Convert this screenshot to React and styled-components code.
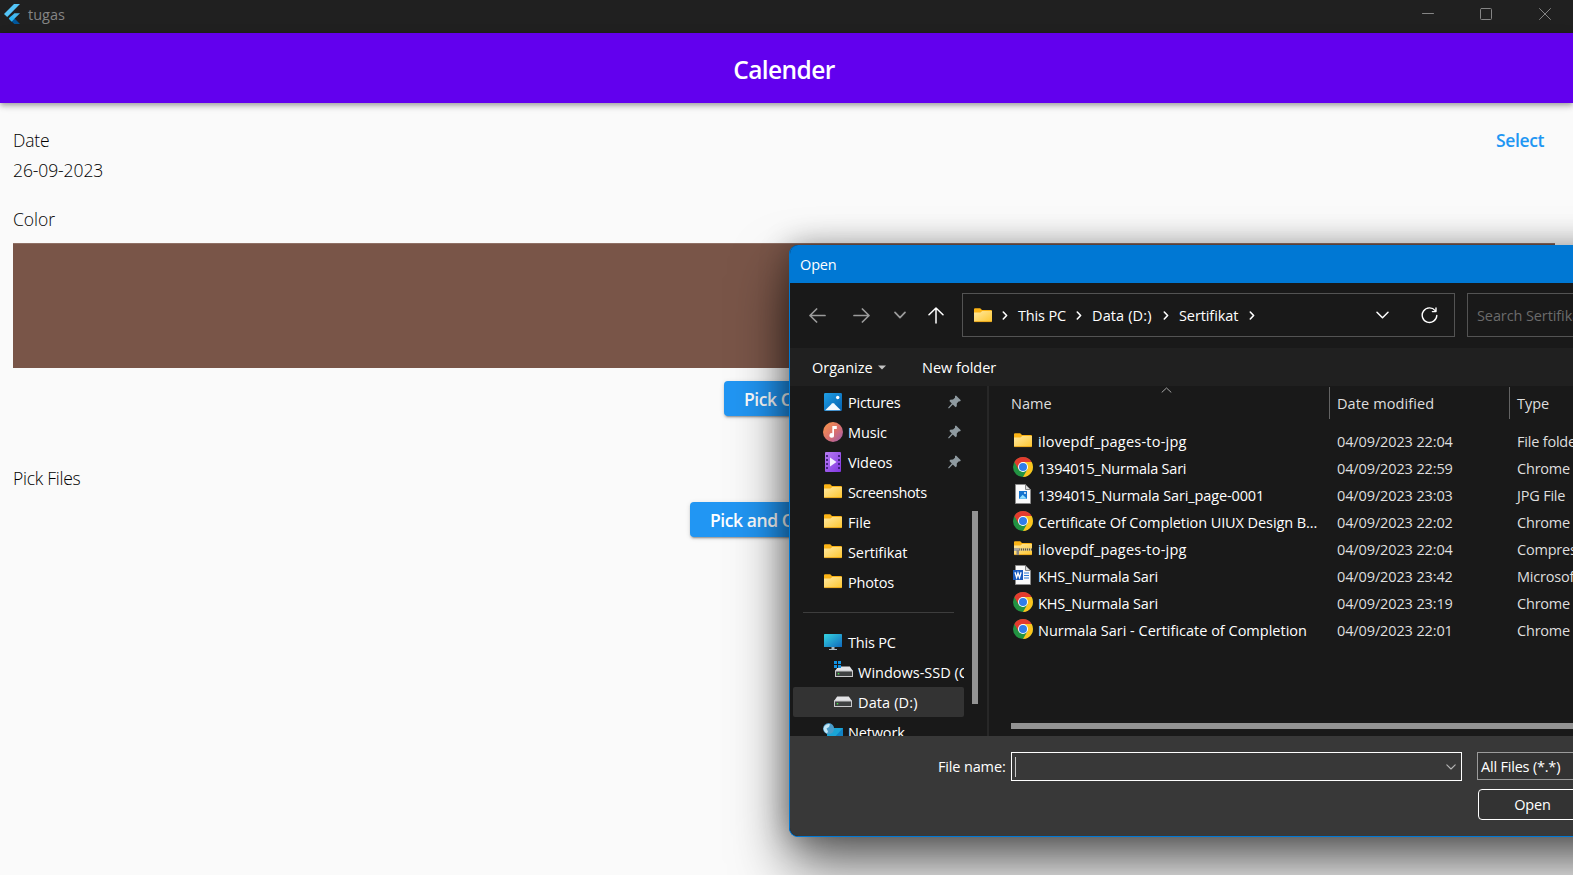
import React from "react";
import styled, { createGlobalStyle } from "styled-components";

const GlobalStyle = createGlobalStyle`
  * { box-sizing: border-box; }
  html, body { margin: 0; padding: 0; overflow: hidden; }
  body {
    font-family: "Open Sans", "Noto Sans", sans-serif;
    font-size: 14.5px;
    background: #fafafa;
  }
  svg { display: block; flex: none; }
`;

/* ---------- main window ---------- */

const Window = styled.div`
  position: relative;
  width: 1573px;
  height: 875px;
  overflow: hidden;
  background: #fafafa;
  display: flex;
  flex-direction: column;
`;

const TitleBar = styled.header`
  height: 33px;
  flex: none;
  background: #202020;
  color: #858585;
  display: flex;
  justify-content: space-between;
  align-items: flex-start;
  padding: 4px 22px 0 4px;
`;

const AppName = styled.div`
  display: flex;
  gap: 8px;
  line-height: 21px;
`;

const WindowControls = styled.div`
  display: flex;
  gap: 46px;
  padding-top: 4px;
`;

const AppBar = styled.div`
  height: 70px;
  flex: none;
  background: #6200ee;
  color: #fff;
  display: flex;
  justify-content: center;
  align-items: center;
  padding: 3px 5px 0 0;
  font-size: 24.5px;
  font-weight: 600;
  letter-spacing: -0.6px;
  box-shadow: 0 2px 4px -1px rgba(0, 0, 0, 0.2), 0 4px 5px rgba(0, 0, 0, 0.14),
    0 1px 10px rgba(0, 0, 0, 0.12);
`;

const Content = styled.main`
  padding: 24px 18px 0 13px;
  display: flex;
  flex-direction: column;
`;

const DateRow = styled.div`
  display: flex;
  justify-content: space-between;
  padding-right: 11px;
`;

const Label = styled.div`
  height: ${(p) => p.$h || 26}px;
  line-height: 26px;
  font-size: 17.5px;
  font-weight: 300;
  color: #000;
  letter-spacing: ${(p) => p.$ls || 0}px;
`;

const DateValue = styled(Label)`
  margin-top: 4px;
  margin-bottom: 23px;
`;

const SelectLink = styled(Label)`
  color: #2196f3;
  font-weight: 600;
`;

const ColorBox = styled.div`
  height: 125px;
  background: #795548;
  border-top: 1px solid #8f7065;
  margin-top: 11px;
`;

const ActionButton = styled.button`
  align-self: center;
  width: ${(p) => p.$w}px;
  height: 35px;
  margin: ${(p) => p.$mt}px 0 ${(p) => p.$mb || 0}px;
  padding: 0 20px;
  border: 0;
  border-radius: 4px;
  background: #2196f3;
  color: #fff;
  font: 600 17.5px "Open Sans", sans-serif;
  letter-spacing: -0.42px;
  text-align: left;
  white-space: nowrap;
  box-shadow: 0 3px 1px -2px rgba(0, 0, 0, 0.2), 0 2px 2px rgba(0, 0, 0, 0.14),
    0 1px 5px rgba(0, 0, 0, 0.12);
`;

/* ---------- file dialog ---------- */

const Dialog = styled.section`
  position: absolute;
  left: 789px;
  top: 245px;
  width: 900px;
  height: 592px;
  border: 1px solid #0078d4;
  border-top: 0;
  border-radius: 9px;
  background: #191919;
  color: #fff;
  overflow: hidden;
  display: flex;
  flex-direction: column;
`;

const DialogShadow = styled(Dialog)`
  overflow: visible;
  box-shadow: 0 28px 56px rgba(0, 0, 0, 0.6), 0 0 30px rgba(0, 0, 0, 0.3);
`;

const Text = styled.span`
  letter-spacing: ${(p) => p.$ls || 0}px;
  white-space: nowrap;
`;

const DialogTitle = styled.div`
  height: 38px;
  flex: none;
  background: #0078d4;
  padding-left: 10px;
  line-height: 39px;
  letter-spacing: -0.15px;
`;

const NavBar = styled.div`
  height: 65px;
  flex: none;
  display: flex;
  align-items: center;
  padding: 0 0 1px 19px;
`;

const NavIcons = styled.div`
  width: 153px;
  flex: none;
  display: flex;
  align-items: center;
`;

const AddressBox = styled.div`
  width: 493px;
  flex: none;
  height: 44px;
  border: 1px solid #535353;
  display: flex;
  align-items: center;
  padding: 0 16px 0 11px;
`;

const Crumb = styled(Text)`
  width: ${(p) => p.$w}px;
`;

const Crumbs = styled.div`
  flex: 1;
  display: flex;
  align-items: center;
`;

const SearchBox = styled.div`
  width: 200px;
  flex: none;
  height: 44px;
  margin-left: 12px;
  border: 1px solid #535353;
  padding-left: 9px;
  line-height: 43px;
  color: #6b6b6b;
`;

const Toolbar = styled.div`
  height: 38px;
  flex: none;
  background: #202020;
  display: flex;
  align-items: center;
  padding: 1px 0 0 22px;
`;

const Organize = styled.div`
  width: 110px;
  display: flex;
  align-items: center;
  gap: 5px;
`;

const Body = styled.div`
  height: 350px;
  flex: none;
  display: flex;
  overflow: hidden;
`;

const Sidebar = styled.div`
  width: 199px;
  flex: none;
  display: flex;
  border-right: 2px solid #272727;
  padding: 1px 0 0 3px;
`;

const Places = styled.nav`
  width: 171px;
  flex: none;
  height: 360px;
`;

const Place = styled.div`
  height: 30px;
  padding-left: ${(p) => (p.$nested ? 41 : 31)}px;
  padding-right: 3px;
  display: flex;
  align-items: center;
  overflow: hidden;
  border-radius: 2px;
  background: ${(p) => (p.$active ? "#333333" : "transparent")};
`;

const PlaceIcon = styled.span`
  width: 20px;
  display: flex;
  justify-content: center;
  margin: 0 5px 1px -1px;
  flex: none;
`;

const PlaceName = styled(Text)`
  flex: 1;
`;

const Divider = styled.div`
  height: 30px;
  padding: 15px 10px 0 10px;
  &::after {
    content: "";
    display: block;
    height: 1px;
    background: #3d3d3d;
  }
`;

const VerticalThumb = styled.div`
  width: 6px;
  height: 193px;
  margin: 124px 0 0 8px;
  background: #939393;
`;

const Files = styled.div`
  flex: 1;
  padding-left: 22px;
`;

const HeaderRow = styled.div`
  display: grid;
  grid-template-columns: 318px 180px 200px;
  height: 33px;
  margin-bottom: 9px;
  color: #dedede;
`;

const HeaderCell = styled.div`
  position: relative;
  line-height: 33px;
  margin-top: 1px;
  height: 32px;
  padding-left: ${(p) => (p.$first ? 0 : 7)}px;
  border-left: ${(p) => (p.$first ? "0" : "1px solid #636363")};
  letter-spacing: ${(p) => p.$ls || 0}px;
`;

const SortMark = styled.span`
  position: absolute;
  left: 150px;
  top: 0;
`;

const FileRow = styled.div`
  display: grid;
  grid-template-columns: 326px 180px 200px;
  height: 27px;
  align-items: center;
  color: #dedede;
`;

const FileName = styled.div`
  display: flex;
  align-items: center;
  color: #fff;
`;

const FileIcon = styled.span`
  width: 20px;
  height: 23px;
  margin: 0 5px 1px 2px;
  flex: none;
  display: flex;
  justify-content: center;
  align-items: flex-start;
  padding-top: ${(p) => p.$top}px;
`;

const HorizontalThumb = styled.div`
  height: 6px;
  margin-top: 79px;
  background: #939393;
`;

const Footer = styled.footer`
  flex: 1;
  background: #383838;
  padding: 16px 0 0 148px;
`;

const FooterRow = styled.div`
  display: flex;
  align-items: flex-start;
  line-height: 29px;
`;

const FieldLabel = styled(Text)`
  width: 73px;
  flex: none;
`;

const NameInput = styled.div`
  width: 451px;
  flex: none;
  height: 29px;
  margin-right: 15px;
  border: 1px solid #fff;
  display: flex;
  align-items: center;
  justify-content: space-between;
  padding: 0 5px 0 3px;
`;

const Caret = styled.i`
  width: 1px;
  height: 20px;
  background: #c8c8c8;
`;

const FilterBox = styled.div`
  width: 200px;
  flex: none;
  height: 28px;
  border: 1px solid #9b9b9b;
  background: #333;
  padding-left: 3px;
  line-height: 27px;
`;

const OpenButton = styled.button`
  display: block;
  width: 109px;
  height: 31px;
  margin: 8px 0 0 540px;
  border: 1px solid #fff;
  border-radius: 4px;
  background: #333;
  color: #fff;
  font: 14.5px "Open Sans", sans-serif;
  letter-spacing: -0.15px;
  padding: 0;
`;

/* ---------- icons ---------- */

const Stroke = ({ w, h, d, color = "#fff", sw = 1.5 }) => (
  <svg width={w} height={h} viewBox={`0 0 ${w} ${h}`} fill="none" stroke={color} strokeWidth={sw} strokeLinecap="round" strokeLinejoin="round">
    <path d={d} />
  </svg>
);

const NavSlot = styled.span`
  width: ${(p) => p.$w}px;
  display: flex;
`;

const FlutterLogo = () => (
  <svg width="16" height="20" viewBox="0 0 16 20">
    <path d="M10 0H16L3.2 13L0 10Z" fill="#54c5f8" />
    <path d="M10.4 9.2H16L10.6 14.6L7.6 17.4L4.8 14.6Z" fill="#45b8ee" />
    <path d="M7.6 17.4L10.6 14.6L16 20H10.4Z" fill="#01579b" />
    <path d="M4.8 14.6L7.7 11.8L10.6 14.6L7.7 17.4Z" fill="#29b6f6" />
  </svg>
);

const Folder = ({ zip }) => (
  <svg width="18" height="15" viewBox="0 0 18 15">
    <defs>
      <linearGradient id="folderFace" x1="0" y1="0" x2="1" y2="1">
        <stop offset="0" stopColor="#ffe9a3" />
        <stop offset="1" stopColor="#fdc62e" />
      </linearGradient>
    </defs>
    <path d="M0 1.2Q0 .2 1 .2H6.2L8 2H17Q18 2 18 3V8H0Z" fill="#fbb315" />
    <path d="M0 4.4H6.5L8.2 3H18V13.2Q18 14 17 14H1Q0 14 0 13.2Z" fill="url(#folderFace)" />
    <path d="M.4 13.6H17.6" stroke="#e8a317" strokeWidth=".9" />
    {zip && (
      <g>
        <path d="M0 7H18V10H0Z" fill="#d9c27e" />
        <path d="M5 8.5H18" stroke="#5b5440" strokeWidth="2" strokeDasharray="1 1" />
        <path d="M0 7H5.5V10H0Z" fill="#a9a59b" />
        <path d="M2.5 9H5V14H2.5Z" fill="#8b8883" />
      </g>
    )}
  </svg>
);

const Chrome = () => (
  <svg width="20" height="20" viewBox="0 0 20 20">
    <circle cx="10" cy="10" r="10" fill="#229342" />
    <path d="M18.66 5A10 10 0 0 1 10 20L14.33 12.5L10 5Z" fill="#fcc31e" />
    <path d="M1.34 5A10 10 0 0 1 18.66 5H10L5.67 12.5Z" fill="#e33b2e" />
    <circle cx="10" cy="10" r="5" fill="#fff" />
    <circle cx="10" cy="10" r="4" fill="#2f7de9" />
  </svg>
);

const PageShape = () => (
  <g>
    <path d="M2.5 .5H12.5L17.5 5.5V19.5H2.5Z" fill="#fafafa" stroke="#8b8b8b" />
    <path d="M12.5 .5V5.5H17.5Z" fill="#dcdcdc" stroke="#6e6e6e" strokeWidth=".8" />
  </g>
);

const ImageFile = () => (
  <svg width="20" height="20" viewBox="0 0 20 20">
    <PageShape />
    <rect x="6" y="7" width="8" height="8" fill="#1574cf" />
    <path d="M6 14.8L9.6 10.8L14 14.8Z" fill="#8fe0ff" />
    <circle cx="12" cy="9" r=".9" fill="#fff" />
  </svg>
);

const WordFile = () => (
  <svg width="20" height="20" viewBox="0 0 20 20">
    <PageShape />
    <path d="M11 8H16M11 10.5H16M11 13H16" stroke="#2b78d4" />
    <rect x="0" y="5" width="10" height="10" fill="#185abd" />
    <path d="M2 7.3L3.6 12.6L5 8L6.5 12.6L8.1 7.3" fill="none" stroke="#fff" strokeWidth="1.3" />
  </svg>
);

const PicturesIcon = () => (
  <svg width="18" height="18" viewBox="0 0 18 18">
    <defs>
      <linearGradient id="pic" x1="0" y1="0" x2="1" y2="1">
        <stop offset="0" stopColor="#1f9fe6" />
        <stop offset="1" stopColor="#0560ae" />
      </linearGradient>
    </defs>
    <rect width="18" height="18" rx="1.2" fill="url(#pic)" />
    <path d="M1.2 17.2L8 10.4Q9 9.4 10 10.4L16.8 17.2Z" fill="#f4faff" />
    <circle cx="13.7" cy="4.5" r="1.7" fill="#fff" />
  </svg>
);

const MusicIcon = () => (
  <svg width="20" height="20" viewBox="0 0 20 20">
    <defs>
      <linearGradient id="mus" x1="0" y1="0" x2="1" y2="1">
        <stop offset=".1" stopColor="#f5914f" />
        <stop offset=".55" stopColor="#d9706f" />
        <stop offset="1" stopColor="#9a59b5" />
      </linearGradient>
    </defs>
    <circle cx="10" cy="10" r="10" fill="url(#mus)" />
    <path d="M9.3 4H13.8V7H11V13.2A2.3 2.3 0 1 1 9.3 11.2Z" fill="#fff" />
  </svg>
);

const VideosIcon = () => (
  <svg width="16" height="20" viewBox="0 0 16 20">
    <defs>
      <linearGradient id="vid" x1="0" y1="0" x2="1" y2="1">
        <stop offset="0" stopColor="#b77cf3" />
        <stop offset="1" stopColor="#8136e0" />
      </linearGradient>
    </defs>
    <rect width="16" height="20" rx="1" fill="url(#vid)" />
    <path d="M2 3V19M14 3V19" stroke="#3c1c78" strokeWidth="1.8" strokeDasharray="2 2" />
    <path d="M5 5.5L11.5 10L5 14.5Z" fill="#f5f0ff" />
  </svg>
);

const ThisPcIcon = () => (
  <svg width="18" height="16" viewBox="0 0 18 16">
    <defs>
      <linearGradient id="pc" x1="0" y1="0" x2="1" y2="1">
        <stop offset="0" stopColor="#36d5e2" />
        <stop offset="1" stopColor="#0f69bd" />
      </linearGradient>
    </defs>
    <rect width="18" height="13" rx=".6" fill="url(#pc)" />
    <path d="M7.5 13H10.5V15H13V16H5V15H7.5Z" fill="#a9b7c1" />
  </svg>
);

const DriveIcon = ({ system }) => (
  <svg width={system ? 19 : 18} height={system ? 21 : 11} viewBox={system ? "-1 -5 19 21" : "0 0 18 11"}>
    <path d="M0 5L3.2 .4H14.8L18 5Z" fill="#e3e3e6" />
    <path d="M0 4.5H18V11H0Z" fill="#c9c9cb" />
    <path d="M1 5.5H17V10H1Z" fill="#3f4142" />
    <rect x="2.8" y="7" width="1.4" height="1.4" fill="#45e04a" />
    {system && (
      <g>
        <path d="M-1 -5H6V2H-1Z" fill="#191919" />
        <path d="M-1 -5H2V-2H-1ZM3-5H6V-2H3ZM-1-1H2V2H-1ZM3-1H6V2H3Z" fill="#1093e4" />
      </g>
    )}
  </svg>
);

const NetworkIcon = () => (
  <svg width="20" height="18" viewBox="0 0 20 18">
    <rect x="4" y="5" width="16" height="12" fill="#1aa5d6" />
    <path d="M20 5V17H9Z" fill="#1282c4" />
    <circle cx="5.6" cy="5.6" r="5.5" fill="#4a9cc9" />
    <path d="M1.5 3Q4 .5 7 1.2L6 4L3.5 5.5L5 8.5L4 10.5Q.5 8.5 .5 5.5Z" fill="#c3e6f5" />
  </svg>
);

const Pin = () => (
  <svg width="13" height="14" viewBox="0 0 13 14">
    <path d="M8 .4L12.8 5.2L12.2 6.3L10.6 6.4L8.8 8.6L8.8 11.2L7.6 12.2L4.8 9.4L.9 13.4L.1 12.8L3.8 8.4L1.4 6L2.2 4.7L5 4.6L7 2.8L7 1.1Z" fill="#8f9aa0" />
  </svg>
);

const Chevron = () => <Stroke w={6} h={9} d="M1.3 1L4.6 4.5L1.3 8" sw={1.6} />;

/* ---------- data ---------- */

const places = [
  { name: "Pictures", icon: <PicturesIcon />, pin: true, ls: -0.25 },
  { name: "Music", icon: <MusicIcon />, pin: true, ls: -0.15 },
  { name: "Videos", icon: <VideosIcon />, pin: true, ls: -0.1 },
  { name: "Screenshots", icon: <Folder />, ls: -0.35 },
  { name: "File", icon: <Folder /> },
  { name: "Sertifikat", icon: <Folder />, ls: -0.1 },
  { name: "Photos", icon: <Folder />, ls: -0.2 },
  null,
  { name: "This PC", icon: <ThisPcIcon />, ls: -0.2 },
  { name: "Windows-SSD (C:)", icon: <DriveIcon system />, nested: true, ls: 0 },
  { name: "Data (D:)", icon: <DriveIcon />, nested: true, active: true, ls: 0.12 },
  { name: "Network", icon: <NetworkIcon />, ls: -0.15 },
];

const files = [
  { name: "ilovepdf_pages-to-jpg", icon: <Folder />, top: 3, date: "04/09/2023 22:04", type: "File folder", ls: 0.23 },
  { name: "1394015_Nurmala Sari", icon: <Chrome />, date: "04/09/2023 22:59", type: "Chrome HTML Document", ls: -0.22 },
  { name: "1394015_Nurmala Sari_page-0001", icon: <ImageFile />, date: "04/09/2023 23:03", type: "JPG File", ls: -0.12 },
  { name: "Certificate Of Completion UIUX Design B...", icon: <Chrome />, date: "04/09/2023 22:02", type: "Chrome HTML Document", ls: -0.08 },
  { name: "ilovepdf_pages-to-jpg", icon: <Folder zip />, top: 3, date: "04/09/2023 22:04", type: "Compressed folder", ls: 0.23 },
  { name: "KHS_Nurmala Sari", icon: <WordFile />, date: "04/09/2023 23:42", type: "Microsoft Word", ls: -0.13 },
  { name: "KHS_Nurmala Sari", icon: <Chrome />, date: "04/09/2023 23:19", type: "Chrome HTML Document", ls: -0.13 },
  { name: "Nurmala Sari - Certificate of Completion", icon: <Chrome />, date: "04/09/2023 22:01", type: "Chrome HTML Document", ls: 0 },
];

const crumbs = [
  { name: "This PC", w: 58, ls: -0.15 },
  { name: "Data (D:)", w: 71, ls: 0.12 },
  { name: "Sertifikat", w: 70, ls: -0.1 },
];

function OpenDialog() {
  return (
    <>
      <DialogShadow />
      <Dialog>
        <DialogTitle>Open</DialogTitle>
        <NavBar>
          <NavIcons>
            <NavSlot $w={44}>
              <Stroke w={17} h={15} color="#9b9b9b" d="M16 7.5H1M7.6 1L1 7.5L7.6 14" sw={1.7} />
            </NavSlot>
            <NavSlot $w={41}>
              <Stroke w={17} h={15} color="#9b9b9b" d="M1 7.5H16M9.4 1L16 7.5L9.4 14" sw={1.7} />
            </NavSlot>
            <NavSlot $w={34}>
              <Stroke w={12} h={8} color="#9b9b9b" d="M1 1.3L6 6.6L11 1.3" sw={1.7} />
            </NavSlot>
            <Stroke w={16} h={17} d="M8 16V1M1 7.8L8 1L15 7.8" sw={1.5} />
          </NavIcons>
          <AddressBox>
            <Crumbs>
              <NavSlot $w={28}>
                <Folder />
              </NavSlot>
              <NavSlot $w={16}>
                <Chevron />
              </NavSlot>
              {crumbs.map((c) => (
                <React.Fragment key={c.name}>
                  <Crumb $w={c.w} $ls={c.ls}>{c.name}</Crumb>
                  <NavSlot $w={16}>
                    <Chevron />
                  </NavSlot>
                </React.Fragment>
              ))}
            </Crumbs>
            <NavSlot $w={45}>
              <Stroke w={13} h={8} d="M1 1.2L6.5 6.7L12 1.2" sw={1.5} />
            </NavSlot>
            <Stroke w={17} h={17} d="M14.2 3.6A7.3 7.3 0 1 0 15.8 8.5M15 1V4.6H11.4" sw={1.4} />
          </AddressBox>
          <SearchBox>
            <Text $ls={-0.1}>Search Sertifikat</Text>
          </SearchBox>
        </NavBar>
        <Toolbar>
          <Organize>
            <Text $ls={0}>Organize</Text>
            <svg width="8" height="5" viewBox="0 0 8 5">
              <path d="M0 .5H8L4 4.5Z" fill="#c4c4c4" />
            </svg>
          </Organize>
          <Text $ls={0}>New folder</Text>
        </Toolbar>
        <Body>
          <Sidebar>
            <Places>
              {places.map((p, i) =>
                p ? (
                  <Place key={p.name} $nested={p.nested} $active={p.active}>
                    <PlaceIcon>{p.icon}</PlaceIcon>
                    <PlaceName $ls={p.ls}>{p.name}</PlaceName>
                    {p.pin && <Pin />}
                  </Place>
                ) : (
                  <Divider key={i} />
                )
              )}
            </Places>
            <VerticalThumb />
          </Sidebar>
          <Files>
            <HeaderRow>
              <HeaderCell $first>
                Name
                <SortMark>
                  <Stroke w={11} h={6} color="#a5a5a5" d="M1 5.2L5.5 1L10 5.2" sw={1} />
                </SortMark>
              </HeaderCell>
              <HeaderCell $ls={0.1}>Date modified</HeaderCell>
              <HeaderCell>Type</HeaderCell>
            </HeaderRow>
            {files.map((f, i) => (
              <FileRow key={i}>
                <FileName>
                  <FileIcon $top={f.top || 0}>{f.icon}</FileIcon>
                  <Text $ls={f.ls}>{f.name}</Text>
                </FileName>
                <Text $ls={-0.12}>{f.date}</Text>
                <Text $ls={-0.2}>{f.type}</Text>
              </FileRow>
            ))}
            <HorizontalThumb />
          </Files>
        </Body>
        <Footer>
          <FooterRow>
            <FieldLabel $ls={-0.15}>File name:</FieldLabel>
            <NameInput>
              <Caret />
              <Stroke w={10} h={6} color="#b5b5b5" d="M.8 .8L5 5L9.2 .8" sw={1.1} />
            </NameInput>
            <FilterBox>
              <Text $ls={-0.2}>All Files (*.*)</Text>
            </FilterBox>
          </FooterRow>
          <OpenButton>Open</OpenButton>
        </Footer>
      </Dialog>
    </>
  );
}

export default function App() {
  return (
    <Window>
      <GlobalStyle />
      <TitleBar>
        <AppName>
          <FlutterLogo />
          <Text>tugas</Text>
        </AppName>
        <WindowControls>
          <Stroke w={12} h={12} color="#858585" d="M.5 5.5H11.5" sw={1} />
          <Stroke w={13} h={12} color="#858585" d="M1.5 .5H10.5Q11.5 .5 11.5 1.5V10.5Q11.5 11.5 10.5 11.5H1.5Q.5 11.5 .5 10.5V1.5Q.5 .5 1.5 .5Z" sw={1} />
          <Stroke w={12} h={12} color="#858585" d="M.5 .5L11.5 11.5M11.5 .5L.5 11.5" sw={1} />
        </WindowControls>
      </TitleBar>
      <AppBar>Calender</AppBar>
      <Content>
        <DateRow>
          <Label $ls={-0.2}>Date</Label>
          <SelectLink $ls={-0.4}>Select</SelectLink>
        </DateRow>
        <DateValue $ls={-0.1}>26-09-2023</DateValue>
        <Label>Color</Label>
        <ColorBox />
        <ActionButton $w={120} $mt={13} $mb={49}>Pick Color</ActionButton>
        <Label $ls={-0.25}>Pick Files</Label>
        <ActionButton $w={188} $mt={11}>Pick and Open File</ActionButton>
      </Content>
      <OpenDialog />
    </Window>
  );
}
